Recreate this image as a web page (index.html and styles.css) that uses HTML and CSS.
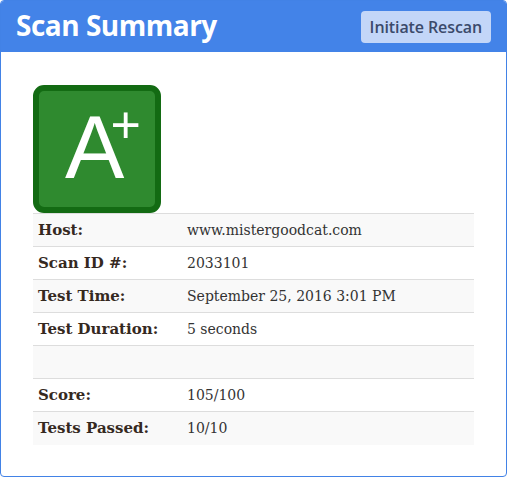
FILE: index.html
```html
<!DOCTYPE html>
<html>
<head>
<meta charset="utf-8">
<link rel="stylesheet" href="styles.css">
</head>
<body>
<div class="panel">
  <div class="panel-header">
    <h1 class="title">Scan Summary</h1>
    <button class="rescan">Initiate Rescan</button>
  </div>
  <div class="panel-body">
    <div class="grade"><span class="grade-letter">A</span><span class="grade-plus">+</span></div>
    <table class="summary">
      <tr><th>Host:</th><td>www.mistergoodcat.com</td></tr>
      <tr><th>Scan ID #:</th><td>2033101</td></tr>
      <tr><th>Test Time:</th><td>September 25, 2016 3:01 PM</td></tr>
      <tr><th>Test Duration:</th><td>5 seconds</td></tr>
      <tr><th></th><td></td></tr>
      <tr><th>Score:</th><td>105/100</td></tr>
      <tr><th>Tests Passed:</th><td>10/10</td></tr>
    </table>
  </div>
</div>
</body>
</html>
```
FILE: styles.css
```css
html, body {
  margin: 0;
  padding: 0;
  background: #ffffff;
}
.panel {
  box-sizing: border-box;
  width: 507px;
  height: 477px;
  border: 1px solid #4282e6;
  border-radius: 4px;
  overflow: hidden;
}
.panel-header {
  height: 51px;
  background: #4383e8;
  display: flex;
  align-items: center;
  justify-content: space-between;
  padding: 0 15px 0 15px;
}
.title {
  margin: 0;
  color: #ffffff;
  font-family: "Open Sans", sans-serif;
  font-weight: 700;
  font-size: 28px;
  letter-spacing: -0.5px;
  padding-bottom: 3px;
}
.rescan {
  height: 32px;
  padding: 0 9px;
  border: none;
  border-radius: 4px;
  background: #c3d6f8;
  color: #3b4a6b;
  font-family: "Open Sans", sans-serif;
  font-weight: 600;
  font-size: 16px;
  letter-spacing: -0.1px;
  margin-top: 1px;
}
.panel-body {
  padding: 33px 32px 0 32px;
}
.grade {
  box-sizing: border-box;
  width: 128px;
  height: 128px;
  border: 6px solid #136b13;
  border-radius: 11px;
  background: #2f8a2f;
  color: #ffffff;
  font-family: "Liberation Sans", Arial, sans-serif;
  display: flex;
  align-items: flex-start;
  justify-content: flex-start;
  padding-left: 26px;
}
.grade-letter {
  font-size: 89px;
  line-height: 1;
  margin-top: 12px;
}
.grade-plus {
  font-size: 52px;
  line-height: 1;
  margin-top: 8px;
  margin-left: -14px;
}
.summary {
  width: 441px;
  border-collapse: collapse;
  font-family: "DejaVu Serif", Georgia, serif;
  font-size: 14px;
  color: #333333;
}
.summary tr {
  height: 33px;
}
.summary tr:nth-child(odd) {
  background: #f9f9f9;
}
.summary th, .summary td {
  border-top: 1px solid #dddddd;
  padding: 0 5px;
  text-align: left;
  vertical-align: middle;
}
.summary th {
  width: 139px;
  font-weight: 700;
  font-size: 15px;
  color: #35291f;
}
.summary td {
  font-weight: 400;
}
```
